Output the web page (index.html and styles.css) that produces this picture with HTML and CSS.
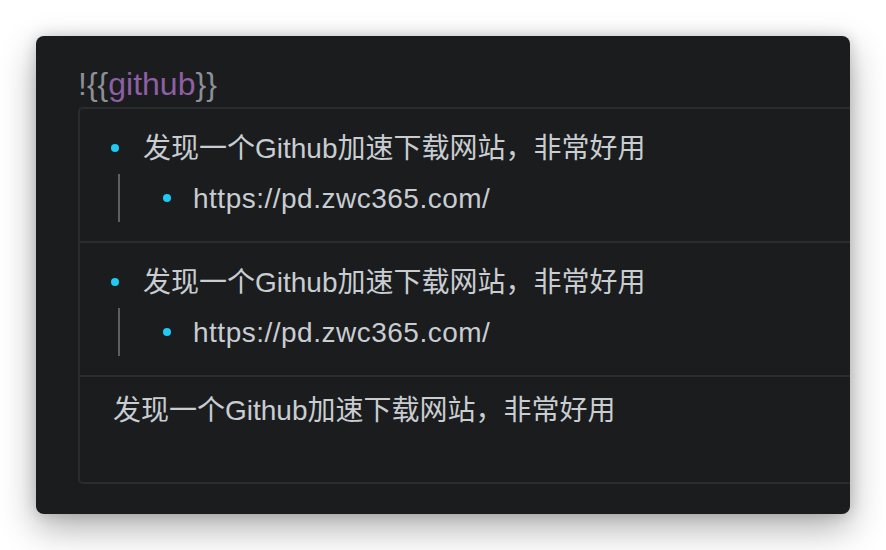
FILE: index.html
```html
<!DOCTYPE html>
<html lang="zh">
<head>
<meta charset="utf-8">
<title>github</title>
<link rel="stylesheet" href="styles.css">
</head>
<body>
<div class="window">
  <div class="title"><span class="brace">!{{</span><span class="tag">github</span><span class="brace">}}</span></div>
  <div class="embed">
    <div class="section">
      <div class="row"><span class="bullet-box"><span class="bullet"></span></span><span class="text">发现一个Github加速下载网站，非常好用</span></div>
      <div class="children">
        <div class="row child"><span class="bullet-box"><span class="bullet"></span></span><span class="text url">https://pd.zwc365.com/</span></div>
      </div>
    </div>
    <div class="section">
      <div class="row"><span class="bullet-box"><span class="bullet"></span></span><span class="text">发现一个Github加速下载网站，非常好用</span></div>
      <div class="children">
        <div class="row child"><span class="bullet-box"><span class="bullet"></span></span><span class="text url">https://pd.zwc365.com/</span></div>
      </div>
    </div>
    <div class="section plain">
      <div class="plain-text">发现一个Github加速下载网站，非常好用</div>
    </div>
  </div>
</div>
</body>
</html>
```

FILE: styles.css
```css
html, body {
  margin: 0;
  padding: 0;
  background: #ffffff;
}
body {
  font-family: "Liberation Sans", "Noto Sans CJK SC", sans-serif;
  height: 550px;
}
.window {
  margin: 36px 0 0 36px;
  width: 814px;
  height: 478px;
  box-sizing: border-box;
  background: #1b1c1e;
  border-radius: 8px;
  overflow: hidden;
  padding: 26px 0 0 42px;
  box-shadow: 0 14px 36px rgba(0, 0, 0, 0.32), 0 0 14px rgba(0, 0, 0, 0.16);
}
.title {
  font-size: 32px;
  line-height: 44px;
  height: 44px;
  margin-bottom: 1px;
  color: #8b9096;
}
.tag {
  color: #8d5fa3;
}
.embed {
  width: 800px;
  border: 2px solid #2b2c2f;
  border-right: none;
  border-radius: 5px 0 0 5px;
}
.section {
  padding: 19px 0 19px 0;
  border-bottom: 2px solid #2b2c2f;
}
.section:last-child {
  border-bottom: none;
}
.row {
  display: flex;
  align-items: center;
  height: 40px;
  padding-left: 21px;
  font-size: 28px;
  line-height: 38px;
  color: #c8cdd2;
  white-space: nowrap;
}
.text {
  padding-top: 2px;
}
.bullet-box {
  width: 28px;
  height: 28px;
  display: flex;
  align-items: center;
  justify-content: center;
  margin-right: 14px;
}
.bullet {
  width: 8px;
  height: 8px;
  border-radius: 50%;
  background: #1fc9f3;
}
.children {
  margin: 6px 0 0 38px;
  border-left: 2px solid #5c5f63;
  height: 48px;
  display: flex;
  align-items: center;
}
.row.child {
  padding-left: 33px;
}
.row.child .bullet-box {
  margin-right: 12px;
}
.url {
  letter-spacing: 0.5px;
}
.section.plain {
  padding: 14px 0 51px 33px;
}
.plain-text {
  font-size: 28px;
  line-height: 40px;
  color: #c8cdd2;
  white-space: nowrap;
}
```
